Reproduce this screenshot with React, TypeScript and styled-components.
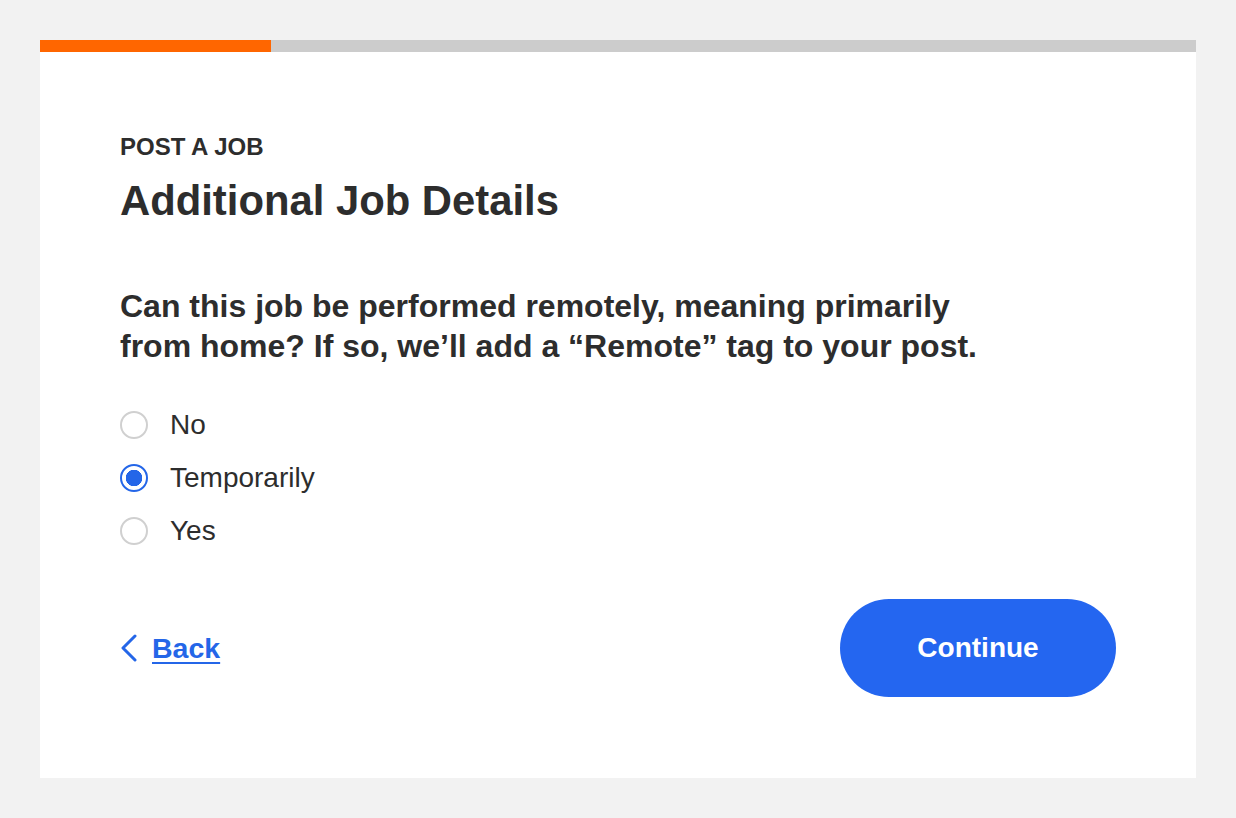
import { useState } from "react";
import styled, { createGlobalStyle } from "styled-components";

const GlobalStyle = createGlobalStyle`
  body {
    margin: 0;
    background: #f2f2f2;
    font-family: "Liberation Sans", Arial, sans-serif;
    color: #2d2d2d;
  }
`;

const options = ["No", "Temporarily", "Yes"];

function App() {
  const [choice, setChoice] = useState("Temporarily");

  return (
    <Page>
      <GlobalStyle />
      <Card>
        <Progress>
          <ProgressFill style={{ width: "20%" }} />
        </Progress>
        <Body>
          <Eyebrow>POST A JOB</Eyebrow>
          <Title>Additional Job Details</Title>
          <Question>
            Can this job be performed remotely, meaning primarily from home? If
            so, we’ll add a “Remote” tag to your post.
          </Question>
          <Options>
            {options.map((opt) => (
              <Option key={opt} onClick={() => setChoice(opt)}>
                <Radio $checked={choice === opt} />
                {opt}
              </Option>
            ))}
          </Options>
          <Footer>
            <BackLink href="#">
              <svg width="18" height="28" viewBox="0 0 18 28" fill="none">
                <path
                  d="M15 2 L3 14 L15 26"
                  stroke="#2466e8"
                  strokeWidth="3"
                  strokeLinecap="round"
                  strokeLinejoin="round"
                />
              </svg>
              <span>Back</span>
            </BackLink>
            <ContinueButton>Continue</ContinueButton>
          </Footer>
        </Body>
      </Card>
    </Page>
  );
}

const Page = styled.div`
  padding: 40px;
`;

const Card = styled.div`
  background: #fff;
  height: 738px;
`;

const Progress = styled.div`
  height: 12px;
  background: #cccccc;
`;

const ProgressFill = styled.div`
  height: 100%;
  background: #ff6600;
`;

const Body = styled.div`
  padding: 80px 80px 0 80px;
`;

const Eyebrow = styled.div`
  font-size: 24px;
  font-weight: 700;
  line-height: 30px;
`;

const Title = styled.h1`
  margin: 15px 0 0;
  font-size: 41.8px;
  font-weight: 700;
  line-height: 48px;
`;

const Question = styled.p`
  margin: 61px 0 0;
  max-width: 900px;
  font-size: 32px;
  font-weight: 700;
  line-height: 40px;
`;

const Options = styled.div`
  display: flex;
  flex-direction: column;
  gap: 25px;
  margin-top: 45px;
`;

const Option = styled.label`
  display: flex;
  align-items: center;
  gap: 22px;
  font-size: 28px;
  line-height: 28px;
  cursor: pointer;
`;

const Radio = styled.span<{ $checked: boolean }>`
  box-sizing: border-box;
  width: 28px;
  height: 28px;
  border-radius: 50%;
  border: 2px solid ${(p) => (p.$checked ? "#2466e8" : "#d0d0d0")};
  background: ${(p) =>
    p.$checked ? "radial-gradient(circle, #2466e8 0 8px, #fff 8.5px)" : "#fff"};
`;

const Footer = styled.div`
  display: flex;
  justify-content: space-between;
  align-items: center;
  margin-top: 54px;
`;

const BackLink = styled.a`
  display: flex;
  align-items: center;
  gap: 14px;
  color: #2466e8;
  font-size: 28.5px;
  font-weight: 700;
  text-decoration: none;

  span {
    text-decoration: underline;
    text-underline-offset: 4px;
  }
`;

const ContinueButton = styled.button`
  width: 276px;
  height: 98px;
  border: 0;
  border-radius: 49px;
  background: #2466f0;
  color: #fff;
  font-family: "Liberation Sans", Arial, sans-serif;
  font-size: 28px;
  font-weight: 700;
  cursor: pointer;
`;

export default App;
